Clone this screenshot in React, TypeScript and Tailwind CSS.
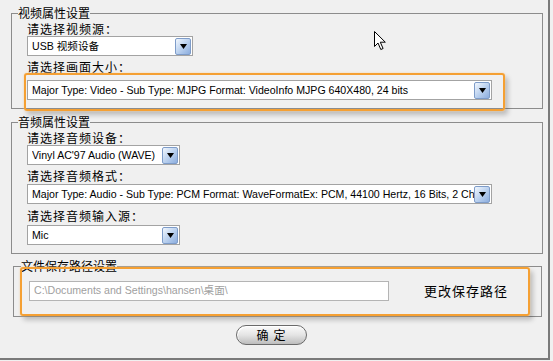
import React from "react";

const cjk = "font-['Noto_Sans_CJK_SC',sans-serif]";
const latin = "font-['Liberation_Sans','Noto_Sans_CJK_SC',sans-serif]";

const DropButton = () => (
  <div className="flex h-[17px] w-[16px] shrink-0 items-center justify-center rounded-[2px] border border-[#7e9cc9] bg-gradient-to-br from-[#f2f7fd] via-[#bcd2ef] to-[#8cadde]">
    <svg width="7" height="5" viewBox="0 0 7 5">
      <path d="M0 0h7L3.5 5z" fill="#000" />
    </svg>
  </div>
);

const Select = ({ value, width }: { value: string; width: string }) => (
  <div
    className={`flex h-[20px] items-center border border-[#a3a3a3] bg-white pl-[4px] pr-[1px] ${width}`}
  >
    <span
      className={`flex-1 overflow-hidden whitespace-nowrap text-[10.6px] leading-[14px] text-black ${latin}`}
    >
      {value}
    </span>
    <DropButton />
  </div>
);

const Label = ({ text, className = "" }: { text: string; className?: string }) => (
  <div className={`text-[12px] leading-[15px] tracking-[1px] text-black ${cjk} ${className}`}>
    {text}
  </div>
);

const Legend = ({ text }: { text: string }) => (
  <legend className={`text-[12px] leading-[14px] text-black ${cjk}`}>{text}</legend>
);

const OrangeFrame = ({ className }: { className: string }) => (
  <div
    className={`pointer-events-none absolute rounded-[3px] border-2 border-[#f5a033] shadow-[0_0_2px_#fbd3a0,3px_4px_5px_rgba(0,0,0,0.22)] ${className}`}
  />
);

const Cursor = () => (
  <svg
    className="absolute left-[374px] top-[31px]"
    width="13"
    height="20"
    viewBox="0 0 13 20"
  >
    <path
      d="M0.5 0.5v15l3.5-3.5 2.8 6.5 2.3-1-2.8-6.3h5z"
      fill="#fff"
      stroke="#000"
      strokeWidth="1"
      strokeLinejoin="miter"
    />
  </svg>
);

export default function App() {
  return (
    <div className="h-[361px] w-[553px] overflow-hidden bg-[#f0f0f0]">
      <div className="relative flex h-[360px] w-[550px] flex-col border-b-2 border-r-2 border-[#7a7a7a]">
        {/* 视频 */}
        <fieldset className="ml-[11px] mt-[6px] w-[532px] border border-[#8c8c8c] pb-[8px] pl-[6px]">
          <Legend text="视频属性设置" />
          <div className="ml-[9px] pt-[1px]">
            <Label text="请选择视频源：" />
            <Select value="USB 视频设备" width="w-[166px]" />
            <Label text="请选择画面大小：" className="mt-[3px]" />
            <div className="relative mt-[6px]">
              <Select
                value="Major Type: Video - Sub Type: MJPG Format: VideoInfo MJPG 640X480, 24 bits"
                width="w-[465px]"
              />
              <OrangeFrame className="-left-[3px] -top-[7px] h-[38px] w-[481px]" />
            </div>
          </div>
        </fieldset>

        {/* 音频 */}
        <fieldset className="ml-[11px] mt-[6px] w-[532px] border border-[#8c8c8c] pb-[8px] pl-[6px]">
          <Legend text="音频属性设置" />
          <div className="ml-[9px] pt-[1px]">
            <Label text="请选择音频设备：" />
            <Select value="Vinyl AC'97 Audio (WAVE)" width="w-[153px]" />
            <Label text="请选择音频格式：" className="mt-[3px]" />
            <div className="mt-[1px]">
              <Select
                value="Major Type: Audio - Sub Type: PCM Format: WaveFormatEx: PCM, 44100 Hertz, 16 Bits, 2 Channels"
                width="w-[465px]"
              />
            </div>
            <Label text="请选择音频输入源：" className="mt-[4px]" />
            <div className="mt-[2px]">
              <Select value="Mic" width="w-[153px]" />
            </div>
          </div>
        </fieldset>

        {/* 路径 */}
        <fieldset className="ml-[13px] mt-[5px] w-[529px] border border-[#8c8c8c] pb-[15px] pl-[7px]">
          <Legend text="文件保存路径设置" />
          <div className="relative ml-[8px] mt-[8px] flex items-center">
            <div
              className={`flex h-[20px] w-[360px] items-center border border-[#b4b4b4] bg-white pl-[4px] text-[10.6px] text-[#a0a0a0] ${latin}`}
            >
              C:\Documents and Settings\hansen\桌面\
            </div>
            <span className={`ml-[35px] text-[13px] tracking-[1px] text-black ${cjk}`}>
              更改保存路径
            </span>
            <OrangeFrame className="-left-[9px] -top-[14px] h-[49px] w-[510px]" />
          </div>
        </fieldset>

        <div className="mt-[8px] flex justify-center pr-[6px]">
          <button
            className={`flex h-[20px] w-[71px] items-center justify-center rounded-full border border-[#6a6a6a] bg-gradient-to-b from-[#fbfbfb] via-[#e4e4e4] to-[#bdbdbd] pl-[5px] text-[12px] tracking-[5px] text-black shadow-[inset_1px_1px_0_#fff] ${cjk}`}
          >
            确定
          </button>
        </div>

        <Cursor />
      </div>
    </div>
  );
}
